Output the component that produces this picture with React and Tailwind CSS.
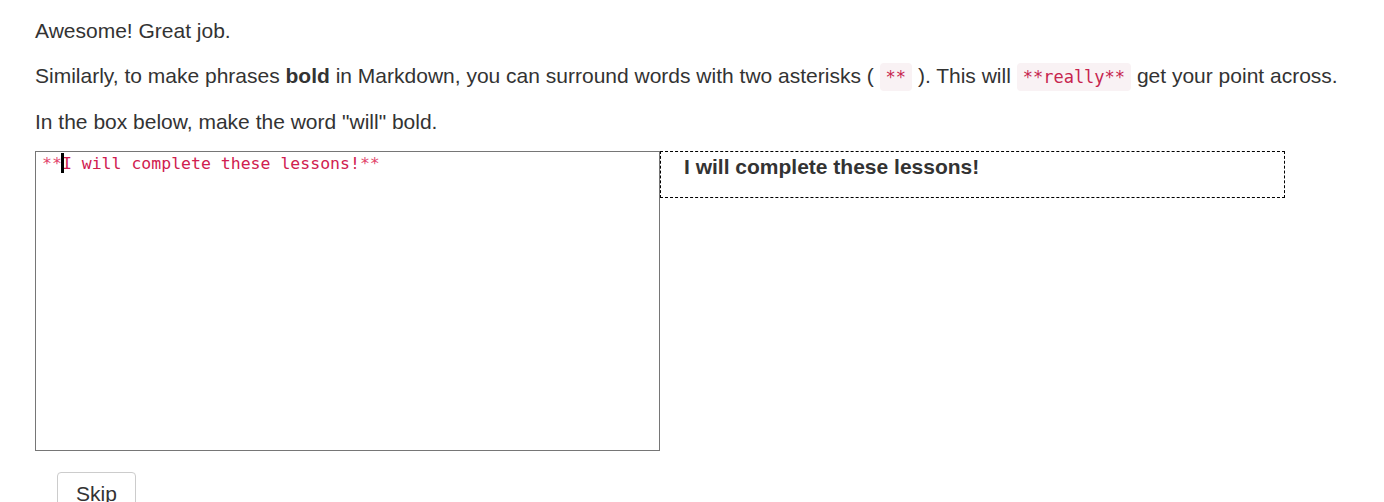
import React from "react";

const Code = ({ children }) => (
  <code className="font-['DejaVu_Sans_Mono',monospace] text-[17px] text-[#c7254e] bg-[#f9f2f4] rounded-[4px] px-[6px] py-[4px]">
    {children}
  </code>
);

const App = () => {
  return (
    <div className="min-h-screen bg-white px-[35px] pt-[16px] text-[21px] text-[#333] font-['Liberation_Sans',Arial,sans-serif]">
      <p className="leading-[30px] mb-[15px]">Awesome! Great job.</p>
      <p className="leading-[30px] mb-[15px]">
        Similarly, to make phrases <b className="font-bold">bold</b> in Markdown, you can surround words with two asterisks ({" "}
        <Code>**</Code> ). This will <Code>**really**</Code> get your point across.
      </p>
      <p className="leading-[30px] mb-[14px]">In the box below, make the word "will" bold.</p>

      <div className="flex items-start">
        {/* editor box */}
        <div className="w-[625px] h-[300px] border border-[#767676] px-[6px] pt-[2px] font-['DejaVu_Sans_Mono',monospace] text-[16.5px] leading-[20px] whitespace-pre">
          <span className="text-[#e2456b]">**</span>
          <span className="relative">
            <span className="absolute left-[-1px] top-[-1px] w-[3px] h-[20px] bg-black"></span>
          </span>
          <span className="text-[#d0204f]">I will complete these lessons!</span>
          <span className="text-[#e2456b]">**</span>
        </div>

        {/* preview */}
        <div className="w-[625px] h-[47px] border border-dashed border-black pl-[23px] pt-[2px]">
          <p className="text-[21px] font-bold leading-[26px]">I will complete these lessons!</p>
        </div>
      </div>

      <button className="mt-[21px] ml-[22px] border border-[#ccc] rounded-[4px] px-[18px] py-[6px] leading-[30px] text-[21px] text-[#333] bg-white">
        Skip
      </button>
    </div>
  );
};

export default App;
